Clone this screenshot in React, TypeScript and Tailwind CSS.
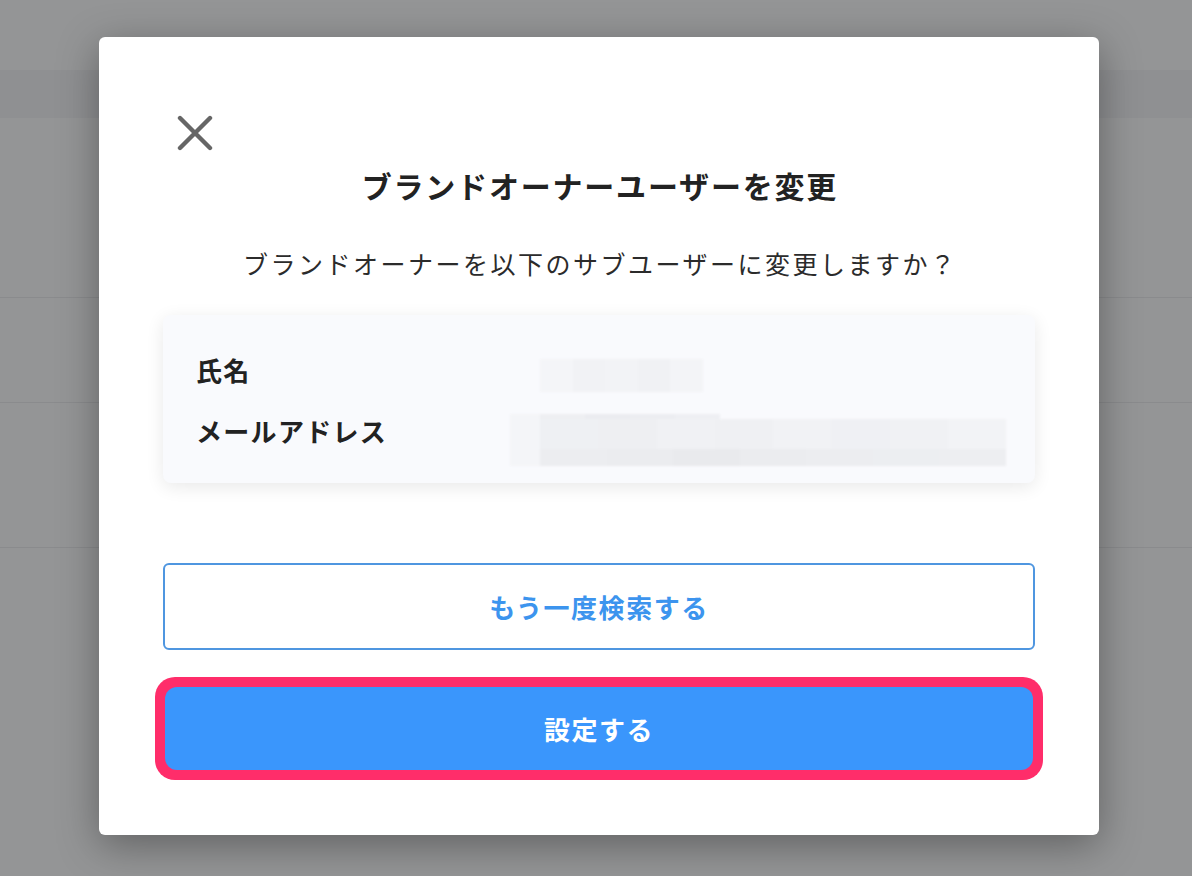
import React from 'react';

const nameBlocks = ['#f4f5f8', '#f1f2f5', '#f2f3f6', '#f0f1f4', '#f3f4f7'];
const mailTop = ['#eeeff2', '#ebecf0', '#ecedf1', '#eeeff3'];
const mailMain = ['#eef0f3', '#eeeff2', '#f0f1f4', '#eff0f3', '#f1f2f5', '#eff0f4', '#f0f1f4', '#f2f3f6'];
const mailBottom = ['#ecedf0', '#ebecef', '#e9eaed', '#ebecef', '#ecedf0', '#eceef1', '#edeef1'];

const BlurStrip: React.FC<{ colors: string[]; className?: string }> = ({ colors, className }) => (
  <div className={`flex ${className ?? ''}`}>
    {colors.map((c, i) => (
      <div key={i} className="flex-1 h-full" style={{ backgroundColor: c }} />
    ))}
  </div>
);

export default function App() {
  return (
    <div className="relative w-[1192px] h-[876px] overflow-hidden bg-[#949596] font-['Noto_Sans_CJK_JP','Noto_Sans',sans-serif]">
      {/* dimmed page behind */}
      <div className="flex flex-col pt-[70px]">
        <div className="h-[48px] bg-[#8f9092]" />
        <div className="h-[180px] border-b border-[#8a8b8d]" />
        <div className="h-[105px] border-b border-[#8a8b8d]" />
        <div className="h-[145px] border-b border-[#8a8b8d]" />
      </div>

      {/* modal */}
      <div className="absolute left-[99px] top-[37px] w-[1000px] h-[798px] bg-white rounded-[6px] shadow-[0_10px_40px_rgba(0,0,0,0.35)] px-[64px] pt-[78px] flex flex-col">
        <button className="w-9 h-9 ml-[14px] text-[#666666]">
          <svg viewBox="0 0 36 36" className="w-9 h-9" fill="none" stroke="currentColor" strokeWidth="4.4" strokeLinecap="round">
            <path d="M3 3 L33 33 M33 3 L3 33" />
          </svg>
        </button>

        <h2 className="mt-[14px] h-[40px] leading-[40px] text-center text-[30px] font-bold tracking-[0.06em] text-[#222222] pl-[0.06em]">
          ブランドオーナーユーザーを変更
        </h2>

        <p className="mt-[40px] h-[36px] leading-[36px] text-center text-[25px] tracking-[0.1em] text-[#2b2b2b] pl-[0.1em]">
          ブランドオーナーを以下のサブユーザーに変更しますか？
        </p>

        <div className="mt-[34px] h-[168px] rounded-[8px] bg-[#f9fafd] shadow-[0_4px_18px_rgba(0,0,0,0.09)] pl-[33px] pr-[29px] pt-[35px] flex flex-col gap-[21px]">
          <div className="flex h-[40px]">
            <div className="w-[344px] leading-[40px] text-[26px] font-bold tracking-[0.05em] text-[#222222]">氏名</div>
            <div className="mt-[9px] flex h-[33px] w-[163px] blur-[1px]">
              <BlurStrip colors={nameBlocks} className="w-full h-full" />
            </div>
          </div>
          <div className="flex h-[40px]">
            <div className="w-[314px] leading-[40px] text-[26px] font-bold tracking-[0.05em] text-[#222222]">メールアドレス</div>
            <div className="mt-[3px] flex h-[52px] w-[496px] blur-[1px]">
              <div className="w-[30px] h-full bg-[#f4f5f8]" />
              <div className="flex-1 flex flex-col">
                <BlurStrip colors={mailTop} className="w-[180px] h-[5px]" />
                <BlurStrip colors={mailMain} className="w-full h-[30px]" />
                <BlurStrip colors={mailBottom} className="w-full h-[17px]" />
              </div>
            </div>
          </div>
        </div>

        <button className="mt-[80px] h-[87px] w-full rounded-[6px] border-2 border-[#4f96e0] bg-white text-[26px] font-bold tracking-[0.06em] text-[#3c94ee]">
          もう一度検索する
        </button>

        <div className="mt-[27px] -mx-[8px] rounded-[20px] bg-[#ff2d6a] p-[10px]">
          <button className="h-[83px] w-full rounded-[12px] bg-[#3a96fc] text-[26px] font-bold tracking-[0.06em] text-white">
            設定する
          </button>
        </div>
      </div>
    </div>
  );
}
